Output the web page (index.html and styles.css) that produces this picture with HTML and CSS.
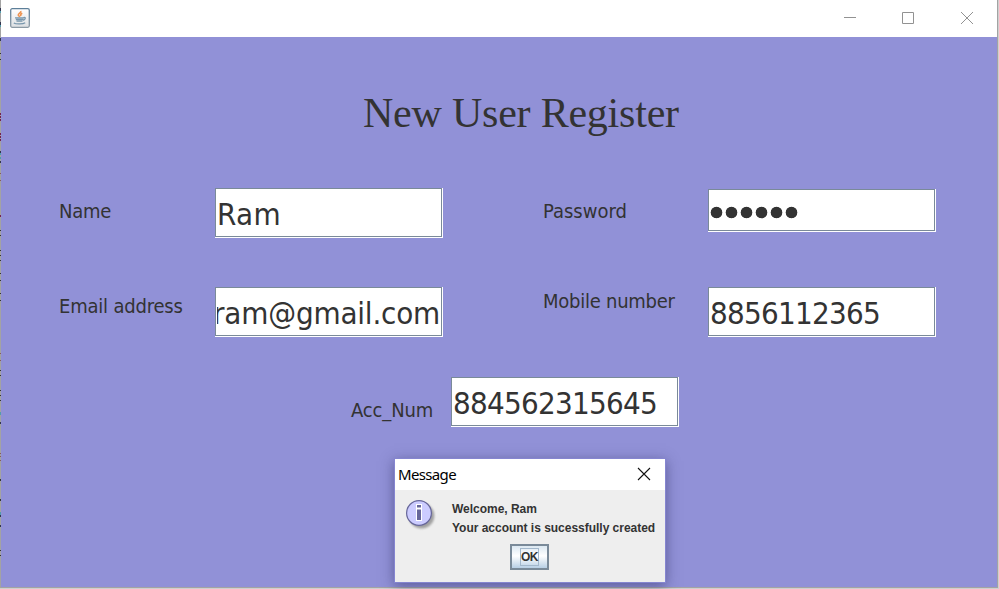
FILE: index.html
```html
<!DOCTYPE html>
<html lang="en">
<head>
<meta charset="utf-8">
<title>New User Register</title>
<link rel="stylesheet" href="styles.css">
</head>
<body>
<main class="window">
  <header class="titlebar">
    <svg class="java" width="20" height="20" viewBox="0 0 20 20">
      <defs><linearGradient id="tile" x2="0" y2="1"><stop stop-color="#fff"/><stop offset="1" stop-color="#dcdfe2"/></linearGradient>
      <linearGradient id="rim" x2="0" y2="1"><stop stop-color="#5d7f99"/><stop offset="1" stop-color="#8c9aa5"/></linearGradient></defs>
      <rect x=".7" y=".7" width="18.6" height="18.6" rx="1.5" fill="url(#tile)" stroke="url(#rim)" stroke-width="1.3"/>
      <path d="M10.800 3c.8 1.700-2.900 2.400-2.500 4 .2.900 1.200 1.100 1.400 2M12.300 5.300c-2.300.9-1.700 1.700-1.400 2.700" fill="none" stroke="#ee9350" stroke-width="1.600"/>
      <path d="M5 9.800h9M5.800 11.500h7.500M6.500 13.200h6M13.600 9.600c2.500-.8 2 2-.5 2.700M3.800 15c2 1.400 9.400 1.200 11.400-.2" fill="none" stroke="#7896ac" stroke-width="1.300"/>
    </svg>
    <svg class="controls" width="132" height="14" viewBox="0 0 132 14" fill="none" stroke="#929292">
      <path d="M1 6.500h12M59.500 1.500h11v11h-11zM118 1l12 12M130 1l-12 12"/>
    </svg>
  </header>
  <section class="form">
    <h1>New User Register</h1>
    <div class="row row-first">
      <label class="left-label">Name</label><div class="field"><span class="name">Ram</span></div>
      <label class="right-label password-label">Password</label><div class="field password"><i></i><i></i><i></i><i></i><i></i><i></i></div>
    </div>
    <div class="row row-second">
      <label class="left-label email-label">Email address</label><div class="field email"><div class="clip"><span>ram@gmail.com</span></div></div>
      <label class="right-label mobile-label">Mobile number</label><div class="field"><span class="digits">8856112365</span></div>
    </div>
    <div class="row row-third">
      <label class="account-label">Acc_Num</label><div class="field"><span class="digits">884562315645</span></div>
    </div>
  </section>
</main>
<svg class="edge" width="1" height="589" shape-rendering="crispEdges">
  <path d="M.5 113v2m0 1v2m0 1v2m0 12v2m0 1v2m0 1v2m0 74v2" stroke="#74234f"/>
  <path d="M.5 8v3m0 11v3m0 13v3m0 110v2m0 8v2m0 249v2m0 8v2m0 91v2m0 8v2" stroke="#31354f"/>
  <path d="M.5 11v2m0 12v2m0 126v2m0 2v2m0 253v3m0 97v3" stroke="#529dad"/>
  <path d="M.5 53v1m0 5v1m0 170v1m0 4v1m0 14v1m0 4v1m0 4v1m0 12v1m0 6v1m0 12v1m0 6v1m0 69v1m0 4v1m0 14v1m0 4v1m0 4v1m0 78v2m0 18v2m0 49v1m0 4v1" stroke="#333"/>
  <path d="M.5 173v1m0 6v1m0 172v1m0 6v1m0 92v1m0 2v1m0 3v1" stroke="#865b5d"/>
</svg>
<section class="dialog">
  <header class="dialog-title"><span>Message</span>
    <svg width="14" height="14" viewBox="0 0 14 14" stroke="#111" stroke-width="1.1"><path d="M1 1l12 12M13 1L1 13"/></svg>
  </header>
  <div class="message">
    <svg class="info" width="32" height="32" viewBox="0 0 32 32">
      <defs><filter id="soft" x="-30%" y="-30%" width="160%" height="160%"><feGaussianBlur stdDeviation="1.3"/></filter></defs>
      <circle cx="15.500" cy="15.700" r="12.800" fill="#777" opacity=".65" filter="url(#soft)"/>
      <circle cx="13" cy="13" r="12.400" fill="#ccf" stroke="#669" stroke-width="1.200"/>
      <path d="M10 4h6v4.500h-6zM10 8.500h6v12.500h-6z" fill="#fff"/>
      <path d="M11 5h4v2.500h-4zM11 9.500h4v10.500h-4z" fill="#669"/>
    </svg>
    <p>Welcome, Ram<br><span>Your account is sucessfully created</span></p>
  </div>
  <button><span>OK</span></button>
</section>
</body>
</html>
```
FILE: styles.css
```css
* { box-sizing: border-box; }
body { margin: 0; width: 999px; height: 589px; overflow: hidden; background: #d0d0d0; color: #333; }
.window { width: 998px; height: 588px; border: solid #a3a3a3; border-width: 0 1px 1px; background: #9191d7; }
.titlebar { height: 37px; background: #fff; display: flex; justify-content: space-between; padding: 8px 22px 0 9px; }
.controls { margin-top: 3px; }
.form { height: 550px; }
h1 { margin: 0; padding: 52px 0 0 362px; height: 151px; font: 42px/48px "Liberation Serif", serif; letter-spacing: -.22px; white-space: nowrap; }
.row { display: flex; align-items: flex-start; padding-left: 58px; }
.row-first { height: 99px; }
.row-second { height: 90px; }
.row-third { padding-left: 350px; }
label { font: 20px/24px "DejaVu Sans Condensed", "DejaVu Sans", sans-serif; letter-spacing: -.25px; white-space: nowrap; padding-top: 11px; }
.left-label { width: 156px; }
.right-label { width: 165px; margin-left: 101px; }
.password-label { letter-spacing: 0; }
.email-label { padding-top: 7px; letter-spacing: -.2px; }
.mobile-label { padding-top: 2px; }
.account-label { width: 100px; padding-top: 21px; letter-spacing: -.15px; }
.field { width: 227px; height: 49px; border: 1px solid #7a8a99; background: #fff; box-shadow: 1px 0 #fff, 0 1px #fff, 1px 1px #fff; padding: 2px 1px 0; overflow: hidden; display: flex; align-items: center; font: 31px/38px "DejaVu Sans Condensed", "DejaVu Sans", sans-serif; letter-spacing: -.2px; }
.name { letter-spacing: .4px; }
.digits { letter-spacing: -.75px; }
.clip { width: 223px; overflow: hidden; display: flex; justify-content: flex-end; }
.password { height: 42px; margin-top: 1px; padding: 4px 2px 0; gap: 4px; }
.password i { width: 11px; height: 11px; border-radius: 50%; background: #333; box-shadow: 0 0 0 .3px #333; }
.edge { position: absolute; left: 0; top: 0; fill: none; }
.dialog { position: absolute; left: 395px; top: 459px; width: 270px; height: 123px; background: #eee; box-shadow: 0 0 0 1px #8585d0, 0 3px 12px 1px #25255a80; }
.dialog-title { height: 31px; background: #fff; color: #000; display: flex; align-items: center; justify-content: space-between; padding: 0 14px 2px 3px; font: 15px "Noto Sans", sans-serif; letter-spacing: -.65px; }
.message { display: flex; padding: 10px 0 0 11px; height: 54px; }
.info { flex: none; }
.message p { margin: 0 0 0 14px; font: bold 12px/19px "Liberation Sans", sans-serif; letter-spacing: -.02px; white-space: nowrap; }
button { display: block; margin: 0 0 0 115px; width: 39px; height: 26px; padding: 2px 6px; border: 2px solid #7a8a99; background: linear-gradient(#dce8f2, #fff 45%, #b8cfe5); font: bold 12px/17px "Liberation Sans", sans-serif; color: #333; }
button span { display: block; width: 19px; height: 18px; margin-left: 2px; border: 1px solid #a3b8cc; letter-spacing: -.5px; }
```
